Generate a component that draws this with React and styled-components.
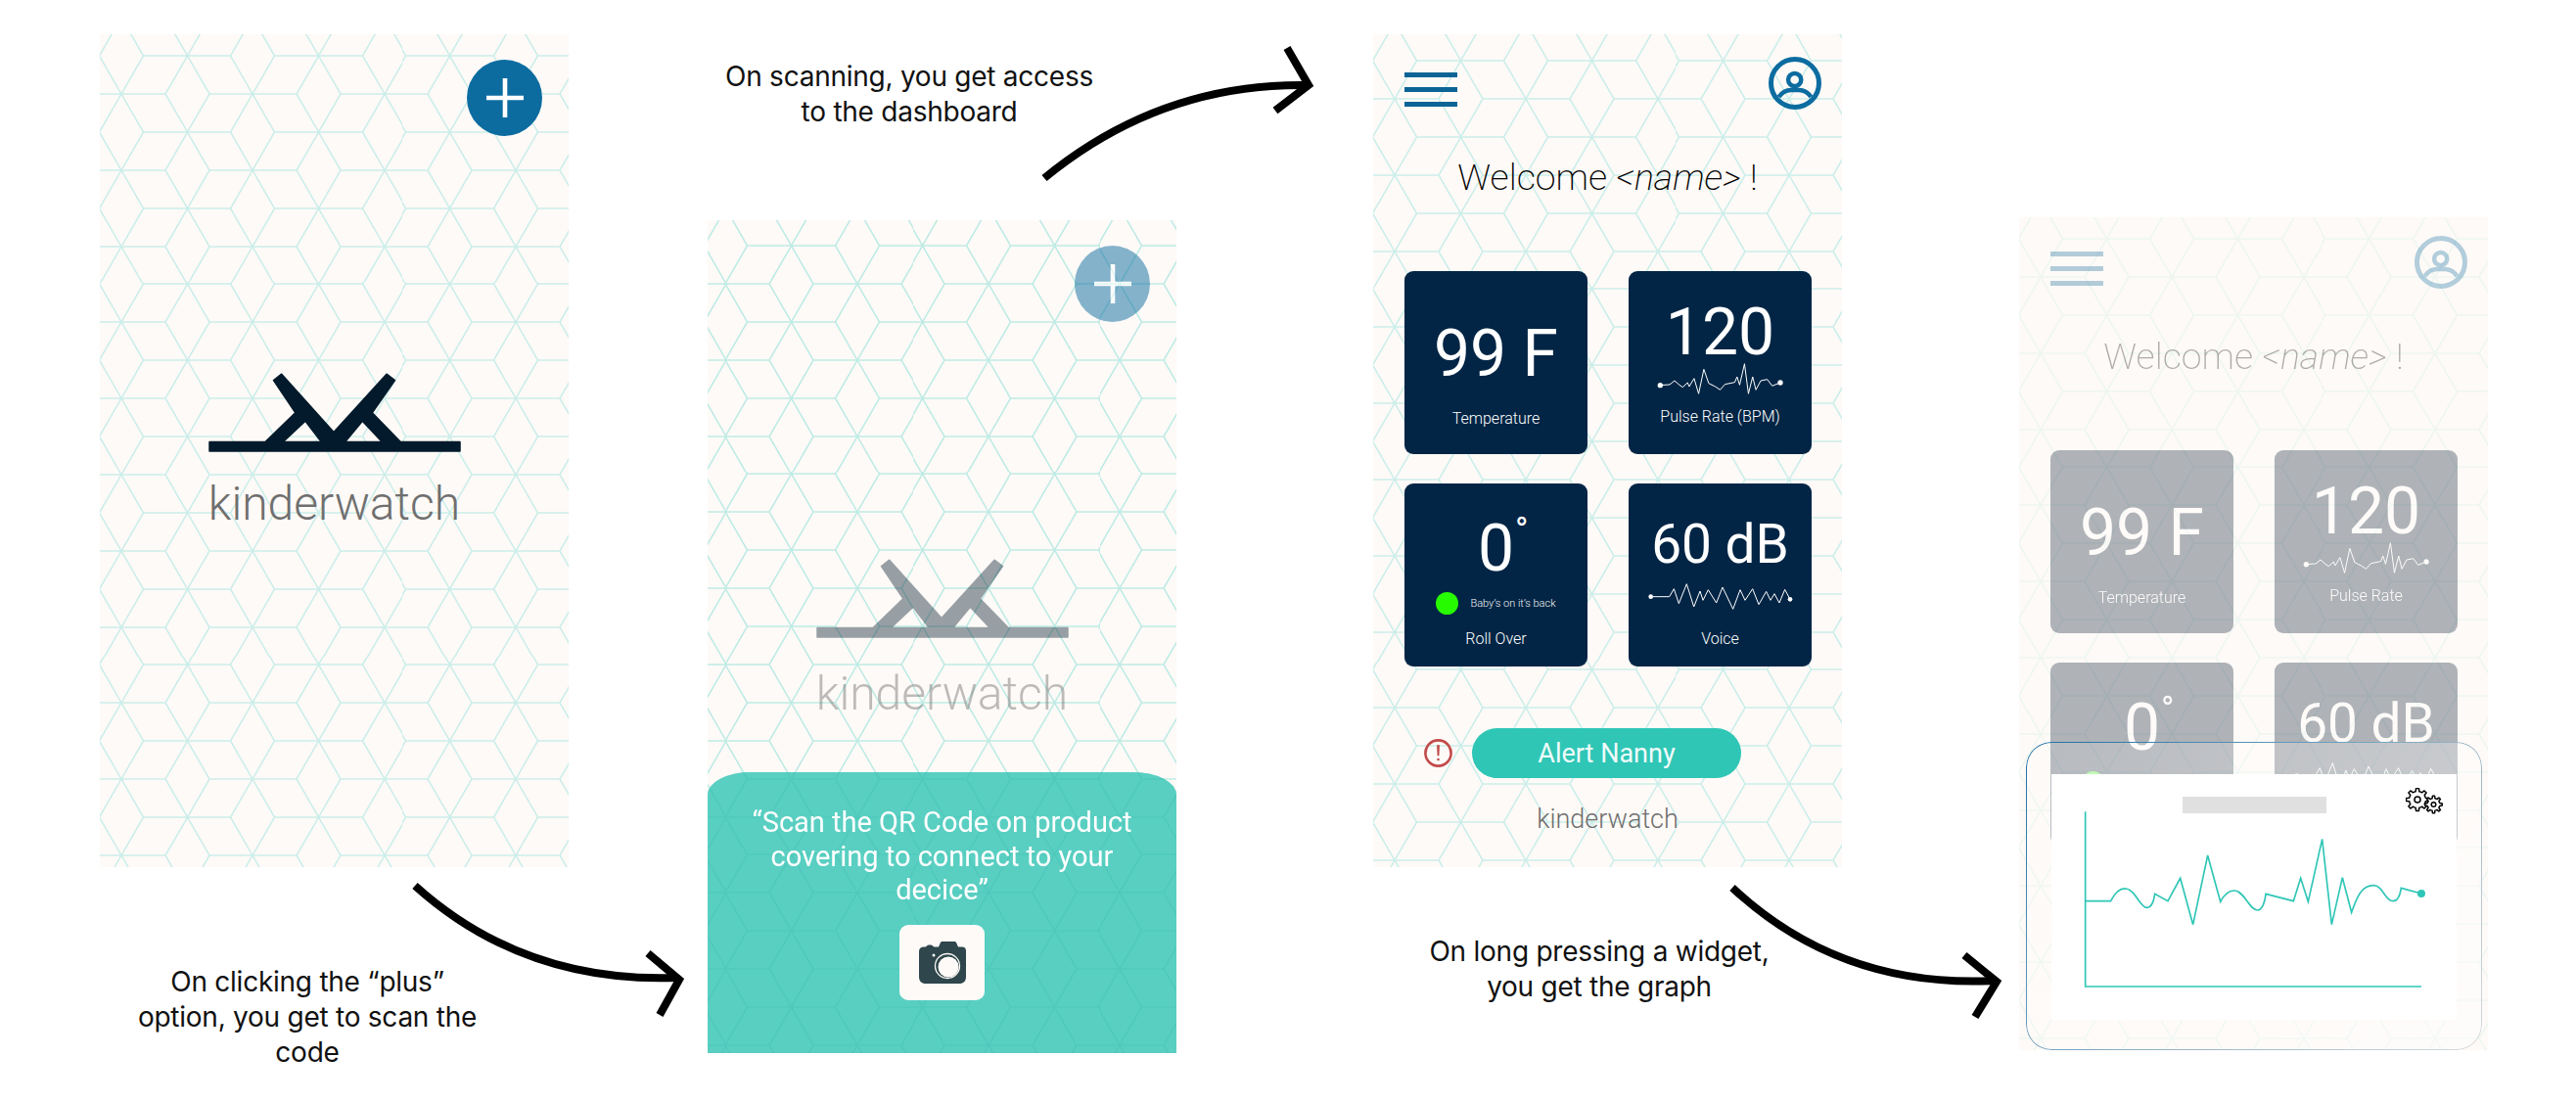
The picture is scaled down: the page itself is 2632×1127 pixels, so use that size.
import styled, { createGlobalStyle } from "styled-components"

const patternTile = (color) => {
    const d = "M0 0H44.8M89.5 0H134.3M0 78H44.8M89.5 78H134.3M22.4 39H111.9M0 0L22.4 39L0 78M134.3 0L111.9 39L134.3 78M44.8 0L67.2 39L89.5 0M44.8 78L67.2 39L89.5 78"
    const svg = `<svg xmlns="http://www.w3.org/2000/svg" width="134.3" height="78" viewBox="0 0 134.3 78" preserveAspectRatio="none"><path d="${d}" fill="none" stroke="${color}" stroke-width="1.6"/></svg>`
    return `url("data:image/svg+xml,${encodeURIComponent(svg)}")`
}

const gearPath = (cx, cy, outer, inner, teeth) => {
    const step = (Math.PI * 2) / teeth
    let d = ""
    for (let i = 0; i < teeth; i++) {
        const a = i * step
        const pts = [
            [inner, a - step * 0.5],
            [inner, a - step * 0.28],
            [outer, a - step * 0.16],
            [outer, a + step * 0.16],
            [inner, a + step * 0.28],
        ]
        pts.forEach(([r, t], j) => {
            const x = (cx + r * Math.cos(t)).toFixed(2)
            const y = (cy + r * Math.sin(t)).toFixed(2)
            d += `${i === 0 && j === 0 ? "M" : "L"}${x} ${y}`
        })
    }
    return d + "Z"
}

const GlobalStyle = createGlobalStyle`
    html, body {
        margin: 0;
        background: #fff;
    }
    body {
        font-family: Roboto, "Liberation Sans", sans-serif;
    }
`

const Board = styled.div`
    position: relative;
    display: flex;
    align-items: flex-start;
    width: 2632px;
    height: 1127px;
    overflow: hidden;
`
const Column = styled.div`
    display: flex;
    flex-direction: column;
    flex: none;
    width: 479px;
    margin-left: ${(p) => p.$gap}px;
    padding-top: ${(p) => p.$top}px;
`
const Caption = styled.p`
    width: 420px;
    margin: ${(p) => p.$top}px 0 ${(p) => p.$bottom || 0}px ${(p) => p.$left}px;
    font-family: Inter, "Liberation Sans", sans-serif;
    font-size: 28px;
    line-height: 36px;
    letter-spacing: -0.25px;
    text-align: center;
    color: #111;
`
const Screen = styled.div`
    position: relative;
    isolation: isolate;
    display: flex;
    flex-direction: column;
    height: 851px;
    overflow: hidden;
    background-color: #fefaf7;
    background-image: ${(p) => patternTile(p.$lines)};
    background-size: 134.3px 77.8px;
    background-position: ${(p) => p.$originX}px ${(p) => p.$originY}px;
`
const FabRow = styled.div`
    display: flex;
    justify-content: flex-end;
    padding: 26px 27px 0;
`
const Fab = styled.button`
    display: flex;
    align-items: center;
    justify-content: center;
    width: 77px;
    height: 78px;
    padding: 0;
    border: none;
    border-radius: 50%;
    background: #0c6ca0;
    opacity: ${(p) => (p.$dim ? 0.5 : 1)};
`
const LogoMark = styled.svg`
    display: block;
    width: 258px;
    height: 81px;
    margin: 242px auto 0;
    opacity: ${(p) => (p.$dim ? 0.4 : 1)};
`
const Brand = styled.div`
    margin-top: ${(p) => p.$top}px;
    font-size: ${(p) => p.$size}px;
    font-weight: 300;
    line-height: ${(p) => p.$line}px;
    text-align: center;
    color: #6f6f6f;
    opacity: ${(p) => (p.$dim ? 0.45 : 1)};
`
const Sheet = styled.div`
    position: relative;
    margin-top: auto;
    height: 287px;
    padding-top: 34px;
    box-sizing: border-box;
    &::before,
    &::after {
        content: "";
        position: absolute;
        inset: 0;
        border-radius: 44px 44px 0 0 / 23px 23px 0 0;
    }
    &::before {
        background: #5ad2c8;
        mix-blend-mode: multiply;
    }
    &::after {
        background: rgba(90, 207, 195, 0.55);
    }
`
const SheetText = styled.p`
    position: relative;
    z-index: 1;
    margin: 0;
    font-size: 29px;
    line-height: 34.5px;
    text-align: center;
    color: #fff;
`
const CameraTile = styled.div`
    position: relative;
    z-index: 1;
    display: flex;
    align-items: center;
    justify-content: center;
    width: 87px;
    height: 77px;
    margin: 18px auto 0;
    border-radius: 9px;
    background: #fefaf7;
`
const Dashboard = styled.div`
    display: flex;
    flex-direction: column;
    opacity: ${(p) => (p.$faded ? 0.31 : 1)};
`
const TopBar = styled.div`
    display: flex;
    justify-content: space-between;
    align-items: flex-start;
    padding: ${(p) => (p.$faded ? 19 : 23)}px 21px 0 32px;
`
const Hamburger = styled.div`
    display: flex;
    flex-direction: column;
    gap: 10px;
    width: 54px;
    margin-top: 16px;
    span {
        display: block;
        height: 5px;
        background: #0c6496;
    }
`
const Welcome = styled.h1`
    margin: 47px 0 0;
    font-size: 37.5px;
    font-weight: 200;
    line-height: 44px;
    text-align: center;
    color: #000;
    em {
        font-style: italic;
    }
`
const CardGrid = styled.div`
    display: grid;
    grid-template-columns: 187px 187px;
    grid-auto-rows: 187px;
    column-gap: 42px;
    row-gap: 30px;
    margin: 74px 0 0 32px;
`
const Card = styled.div`
    display: flex;
    flex-direction: column;
    align-items: center;
    box-sizing: border-box;
    padding: ${(p) => p.$top}px 0 ${(p) => p.$bottom}px;
    border-radius: 9px;
    background: ${(p) => (p.$faded ? "#02152c" : "#022545")};
    color: #fff;
`
const Value = styled.div`
    position: relative;
    font-size: ${(p) => p.$size || 66}px;
    line-height: ${(p) => p.$size || 66}px;
`
const Degree = styled.span`
    position: absolute;
    left: 100%;
    top: -8px;
    margin-left: 1px;
    font-size: 36px;
    line-height: 44px;
`
const Wave = styled.svg`
    display: block;
    margin-top: ${(p) => p.$top}px;
`
const StatusRow = styled.div`
    display: flex;
    align-items: center;
    gap: 12px;
    margin-top: 11px;
`
const StatusDot = styled.span`
    width: 23px;
    height: 23px;
    border-radius: 50%;
    background: #27fb00;
`
const StatusText = styled.span`
    font-size: 11px;
    font-weight: 300;
    color: #f0f2f4;
`
const CardLabel = styled.div`
    margin-top: auto;
    font-size: 16px;
    font-weight: 300;
    line-height: 20px;
    color: #fff;
`
const AlertRow = styled.div`
    display: flex;
    align-items: center;
    gap: 20px;
    margin: 63px 0 0 52px;
`
const AlertButton = styled.button`
    width: 275px;
    height: 51px;
    padding: 0;
    border: none;
    border-radius: 26px;
    background: #2fc6b6;
    font-family: inherit;
    font-size: 27px;
    color: #effbf9;
`
const Glass = styled.div`
    position: absolute;
    left: 7px;
    bottom: 0;
    width: 466px;
    height: 315px;
    box-sizing: border-box;
    padding: 33px 26px 0;
    border-radius: 26px;
    background: linear-gradient(120deg, rgba(255, 255, 255, 0.1), rgba(255, 255, 255, 0.4));
    &::before {
        content: "";
        position: absolute;
        inset: 0;
        padding: 1px;
        border-radius: inherit;
        background: linear-gradient(135deg, #1d6fa5, #8fb0c6 55%, #d5dadd);
        -webkit-mask: linear-gradient(#000 0 0) content-box, linear-gradient(#000 0 0);
        -webkit-mask-composite: xor;
        mask-composite: exclude;
    }
`
const GraphPanel = styled.div`
    position: relative;
    width: 414px;
    height: 251px;
    box-sizing: border-box;
    padding-top: 23px;
    background: #fff;
`
const GraphTitle = styled.div`
    width: 147px;
    height: 17px;
    margin: 0 auto;
    background: #e0e0e0;
`
const GearIcon = styled.svg`
    position: absolute;
    top: 14px;
    right: 14px;
`
const GraphChart = styled.svg`
    display: block;
    margin-top: -3px;
`
const ArrowLayer = styled.svg`
    position: absolute;
    inset: 0;
    pointer-events: none;
`

const Plus = () => (
    <svg width="38" height="40" viewBox="0 0 38 40">
        <path d="M19 0V40M0 20H38" stroke="#fff" strokeWidth="4.6" fill="none" />
    </svg>
)

const Logo = ({ dim }) => (
    <LogoMark $dim={dim} viewBox="0 0 258 81">
        <path
            fill="#021a2b"
            stroke="#021a2b"
            strokeWidth="1.5"
            strokeLinejoin="round"
            fillRule="evenodd"
            d="M66.5 7.5L74.7 1.2L128 60.5L182 1.2L190.5 7.5L167.3 40.7L196.3 70.5H257V80H1V70.5H58L88.7 40.7ZM99 49.3L76.3 70.5H115.3ZM157.3 49.3L139.7 70.5H177.3Z"
        />
    </LogoMark>
)

const CameraIcon = () => (
    <svg width="48" height="43" viewBox="0 0 48 43">
        <path
            fill="#2e464c"
            d="M0 10C0 7 2 5.500 5 5.500H7C8 4 9 3.500 11 3.500C13 3.500 14 4 15 5.500H20L22 1C22.500 0.300 23 0 24 0H36C37 0 37.500 0.300 38 1L40 5.500H44C46.500 5.500 48 7 48 9.500V36C48 40.500 45.500 43 41 43H7C2.500 43 0 40.500 0 36Z"
        />
        <circle cx="29" cy="25" r="12.500" fill="#2e464c" stroke="#fefaf7" strokeWidth="1.300" />
        <circle cx="30" cy="26" r="10.500" fill="#fefaf7" />
        <circle cx="15" cy="14" r="1.500" fill="#fefaf7" />
    </svg>
)

const Avatar = () => (
    <svg width="54" height="54" viewBox="0 0 54 54" fill="none" stroke="#0c6ca0">
        <circle cx="27" cy="27" r="24.500" strokeWidth="5" />
        <circle cx="26.700" cy="23.500" r="6.600" strokeWidth="4.500" />
        <path d="M10.500 41C14 36 19 34 23 34H31C35 34 40 36 43.500 41" strokeWidth="4.500" />
    </svg>
)

const AlertIcon = () => (
    <svg width="29" height="29" viewBox="0 0 29 29" fill="none">
        <circle cx="14.500" cy="14.500" r="13.100" stroke="#c24b4b" strokeWidth="2.600" />
        <path d="M13.500 6.500H15.500L15 17H14Z" fill="#c24b4b" stroke="#c24b4b" strokeWidth="0.800" />
        <circle cx="14.500" cy="21" r="1.300" fill="#c24b4b" />
    </svg>
)

const PulseWave = () => (
    <Wave $top={-3} width="133" height="33" viewBox="900 1015 400 99" fill="none" stroke="#fff">
        <path
            strokeWidth="3"
            d="M916 1086L945 1084L960 1072L975 1085L985 1092L1000 1078L1005 1090L1020 1065L1034 1112L1050 1037L1065 1080L1085 1090L1100 1100L1115 1083L1145 1077L1152 1060L1160 1085L1175 1020L1187 1112L1200 1060L1210 1100L1225 1072L1245 1068L1260 1088L1285 1078"
        />
        <circle cx="916" cy="1086" r="8" fill="#fff" stroke="none" />
        <circle cx="1285" cy="1078" r="8" fill="#fff" stroke="none" />
    </Wave>
)

const VoiceWave = () => (
    <Wave $top={11} width="150" height="30" viewBox="875 375 450 90" fill="none" stroke="#fff">
        <path
            strokeWidth="3"
            d="M886 419L943 419L957 395L972 440L996 380L1018 450L1037 402L1046 430L1062 398L1087 438L1106 390L1138 457L1160 398L1175 430L1198 395L1217 443L1240 403L1253 430L1265 410L1280 438L1297 397L1313 427"
        />
        <circle cx="886" cy="419" r="7" fill="#fff" stroke="none" />
        <circle cx="1313" cy="427" r="7" fill="#fff" stroke="none" />
    </Wave>
)

const DashboardContent = ({ faded, pulseLabel }) => (
    <Dashboard $faded={faded}>
        <TopBar $faded={faded}>
            <Hamburger>
                <span />
                <span />
                <span />
            </Hamburger>
            <Avatar />
        </TopBar>
        <Welcome>
            Welcome <em>&lt;name&gt;</em> !
        </Welcome>
        <CardGrid>
            <Card $faded={faded} $top={51.5} $bottom={26}>
                <Value>99 F</Value>
                <CardLabel>Temperature</CardLabel>
            </Card>
            <Card $faded={faded} $top={29.5} $bottom={28}>
                <Value>120</Value>
                <PulseWave />
                <CardLabel>{pulseLabel}</CardLabel>
            </Card>
            <Card $faded={faded} $top={33.5} $bottom={18}>
                <Value>
                    0<Degree>°</Degree>
                </Value>
                <StatusRow>
                    <StatusDot />
                    <StatusText>Baby’s on it’s back</StatusText>
                </StatusRow>
                <CardLabel>Roll Over</CardLabel>
            </Card>
            <Card $faded={faded} $top={35} $bottom={18}>
                <Value $size={55}>60 dB</Value>
                <VoiceWave />
                <CardLabel>Voice</CardLabel>
            </Card>
        </CardGrid>
        {!faded && (
            <>
                <AlertRow>
                    <AlertIcon />
                    <AlertButton>Alert Nanny</AlertButton>
                </AlertRow>
                <Brand $top={26} $size={27} $line={32}>
                    kinderwatch
                </Brand>
            </>
        )}
    </Dashboard>
)

const Gears = () => (
    <GearIcon width="38" height="27" viewBox="0 0 38 27" fill="#fff" stroke="#000" strokeWidth="1.500" strokeLinejoin="round">
        <path d={gearPath(12, 12, 11.5, 8.5, 8)} />
        <circle cx="12" cy="12" r="3" />
        <path d={gearPath(28.5, 17, 8.8, 6.4, 8)} />
        <circle cx="28.500" cy="17" r="2.300" />
    </GearIcon>
)

const Graph = () => (
    <GraphPanel>
        <GraphTitle />
        <Gears />
        <GraphChart width="414" height="214" viewBox="138 292 1242 642" fill="none" stroke="#2fc6b6" strokeWidth="5">
            <path d="M242 296V832H1272" />
            <path d="M242 570H320C335 540 350 530 367 532C395 535 410 590 430 590C445 590 452 570 455 548L495 570L533 500L572 642L617 430L656 572C670 545 685 537 700 538C730 540 745 598 770 598C785 598 793 570 795 548L880 570L902 500L925 572L968 380L997 642L1030 498L1058 605C1075 555 1090 522 1125 522C1155 522 1160 570 1185 570C1200 570 1207 550 1210 530L1272 547" />
            <circle cx="1272" cy="547" r="12" fill="#2fc6b6" stroke="none" />
        </GraphChart>
    </GraphPanel>
)

const Arrows = () => (
    <ArrowLayer width="2632" height="1127" viewBox="0 0 2632 1127" fill="none" stroke="#000" strokeWidth="8">
        <path d="M424 905Q535 1005 692 999" />
        <path d="M662 974L694 1001L674 1037" />
        <path d="M1067 182Q1185 85 1335 87" />
        <path d="M1315 49L1337 87L1303 113" />
        <path d="M1770 907Q1880 1010 2038 1002" />
        <path d="M2007 976L2040 1003L2018 1039" />
    </ArrowLayer>
)

const App = () => (
    <>
        <GlobalStyle />
        <Board>
            <Column $gap={102} $top={35}>
                <Screen $lines="#cceeea" $originX={22} $originY={61}>
                    <FabRow>
                        <Fab>
                            <Plus />
                        </Fab>
                    </FabRow>
                    <Logo />
                    <Brand $top={25} $size={48} $line={56}>
                        kinderwatch
                    </Brand>
                </Screen>
                <Caption $top={99} $left={2}>
                    On clicking the “plus”
                    <br />
                    option, you get to scan the
                    <br />
                    code
                </Caption>
            </Column>
            <Column $gap={142} $top={60}>
                <Caption $top={0} $bottom={93} $left={-4}>
                    On scanning, you get access
                    <br />
                    to the dashboard
                </Caption>
                <Screen $lines="#bfebe5" $originX={18.5} $originY={65}>
                    <FabRow>
                        <Fab $dim>
                            <Plus />
                        </Fab>
                    </FabRow>
                    <Logo dim />
                    <Brand $dim $top={29} $size={48} $line={56}>
                        kinderwatch
                    </Brand>
                    <Sheet>
                        <SheetText>
                            “Scan the QR Code on product
                            <br />
                            covering to connect to your
                            <br />
                            decice”
                        </SheetText>
                        <CameraTile>
                            <CameraIcon />
                        </CameraTile>
                    </Sheet>
                </Screen>
            </Column>
            <Column $gap={201} $top={35}>
                <Screen $lines="#cceeea" $originX={22} $originY={66}>
                    <DashboardContent pulseLabel="Pulse Rate (BPM)" />
                </Screen>
                <Caption $top={68} $left={21}>
                    On long pressing a widget,
                    <br />
                    you get the graph
                </Caption>
            </Column>
            <Column $gap={181} $top={222}>
                <Screen $lines="#eef6f2" $originX={22} $originY={61}>
                    <DashboardContent faded pulseLabel="Pulse Rate" />
                    <Glass>
                        <Graph />
                    </Glass>
                </Screen>
            </Column>
            <Arrows />
        </Board>
    </>
)

export default App
